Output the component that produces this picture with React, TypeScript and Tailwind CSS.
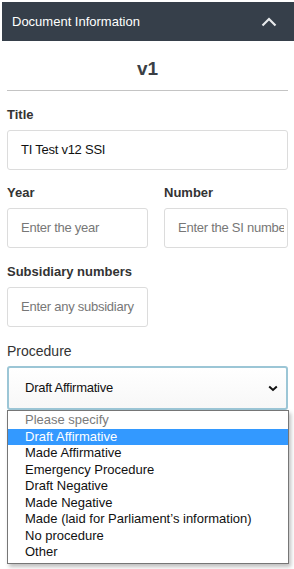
import React from "react";

const font = { fontFamily: '"Liberation Sans", Arial, sans-serif' };

export default function App() {
  const options = [
    "Please specify",
    "Draft Affirmative",
    "Made Affirmative",
    "Emergency Procedure",
    "Draft Negative",
    "Made Negative",
    "Made (laid for Parliament\u2019s information)",
    "No procedure",
    "Other",
  ];
  const field = "mt-[7px] h-[40px] border border-[#dcdcdc] rounded-[3px] flex items-center pl-[13px] text-[13px] tracking-[-0.25px] whitespace-nowrap overflow-hidden";
  return (
    <div className="w-[294px] h-[569px] bg-white overflow-hidden" style={font}>
      <div className="ml-[2px] mt-[2px] h-[39px] bg-[#363f4a] flex items-center justify-between pl-[10px] pr-[17px]">
        <span className="text-white text-[13px] leading-none">Document Information</span>
        <svg width="16" height="10" viewBox="0 0 16 10" fill="none">
          <path d="M1.5 8.5 L8 2 L14.5 8.5" stroke="#e8eaec" strokeWidth="2.2" />
        </svg>
      </div>
      <div className="pl-[7px] pr-[6px]">
        <div className="h-[50px] flex items-center justify-center border-b border-[#c4c4c4]">
          <span className="text-[19px] font-bold text-[#3a3f45] mt-[7px]">v1</span>
        </div>
        <div className="mt-[16px] text-[13px] font-bold text-[#333] leading-[16px]">Title</div>
        <div className={field + " text-[#111]"}>TI Test v12 SSI</div>
        <div className="flex gap-[16px]">
          <div className="w-[141px] shrink-0">
            <div className="mt-[15px] text-[13px] font-bold text-[#333] leading-[16px]">Year</div>
            <div className={field + " text-[#777]"}>Enter the year</div>
          </div>
          <div className="flex-1 min-w-0">
            <div className="mt-[15px] text-[13px] font-bold text-[#333] leading-[16px]">Number</div>
            <div className={field + " text-[#777] pr-[3px]"}>
              <span className="block overflow-hidden">Enter the SI number</span>
            </div>
          </div>
        </div>
        <div className="mt-[16px] text-[13px] font-bold text-[#333] leading-[16px]">Subsidiary numbers</div>
        <div className={field + " w-[141px] text-[#777]"}>Enter any subsidiary</div>
        <div className="mt-[16px] text-[14px] text-[#333] leading-[16px]">Procedure</div>
        <div className="mt-[7px] h-[44px] border-2 border-[#9cc6d6] rounded-[3px] flex items-center justify-between pl-[16px] pr-[8px] text-[13px] tracking-[-0.25px] text-[#111] bg-gradient-to-b from-white to-[#f7f7f7]">
          <span>Draft Affirmative</span>
          <svg width="10" height="7" viewBox="0 0 10 7" fill="none">
            <path d="M1.2 1.5 L5 5 L8.8 1.5" stroke="#111" strokeWidth="2" />
          </svg>
        </div>
        <div className="w-[282px] border border-[#767676] bg-white shadow-[2px_3px_4px_rgba(0,0,0,0.25)] pt-[1px] pb-[2px]">
          {options.map((o, i) => (
            <div
              key={o}
              className={
                "h-[16.5px] leading-[16.5px] pl-[17px] text-[13px] whitespace-nowrap " +
                (i === 1 ? "bg-[#3399ff] text-white" : i === 0 ? "text-[#7a7a7a]" : "text-[#111]")
              }
            >
              {o}
            </div>
          ))}
        </div>
      </div>
    </div>
  );
}
